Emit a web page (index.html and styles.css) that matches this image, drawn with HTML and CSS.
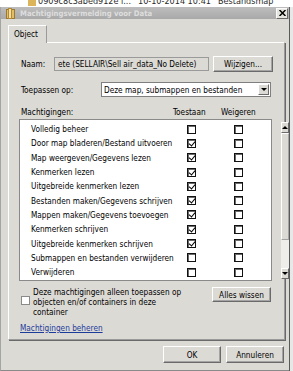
FILE: index.html
```html
<html>
<head>
    <title>Machtigingsvermelding voor Data</title>
    <link rel="stylesheet" href="styles.css">
</head>
<body>
    <!-- explorer row behind the dialog, only its lower half shows -->
    <div class="behind">
        <div class="behind-row">
            <span class="behind-icon"></span>
            <span class="behind-name">0909c8c3abed912e i...</span>
            <span class="behind-date">10-10-2014 10:41</span>
            <span class="behind-type">Bestandsmap</span>
        </div>
    </div>

    <div class="screen">
        <div class="dialog">
            <div class="titlebar">
                <svg class="title-icon" width="9" height="11" viewBox="0 0 9 11">
                    <rect x="0.5" y="1.5" width="8" height="9" fill="#e2bd63" stroke="#9c7a30"/>
                    <rect x="2.5" y="0.5" width="3" height="10" fill="#f4dea0" stroke="#b08a3a"/>
                </svg>
                <span class="title-text">Machtigingsvermelding voor Data</span>
                <div class="close-btn">
                    <svg width="7" height="6" viewBox="0 0 7 6">
                        <path d="M0.5 0 L6.5 6 M6.5 0 L0.5 6" stroke="#000" stroke-width="1.5"/>
                    </svg>
                </div>
            </div>

            <div class="body">
                <div class="tabs">
                    <div class="tab">Object</div>
                </div>
                <div class="panel">
                    <div class="row row-name">
                        <span class="lbl">Naam:</span>
                        <div class="name-field">ete (SELLAIR\Sell air_data_No Delete)</div>
                        <div class="btn btn-change">Wijzigen...</div>
                    </div>
                    <div class="row row-apply">
                        <span class="lbl">Toepassen op:</span>
                        <div class="combo">
                            <span class="combo-text">Deze map, submappen en bestanden</span>
                            <span class="combo-arrow"><span class="tri-down"></span></span>
                        </div>
                    </div>

                    <div class="perm-head">
                        <span class="perm-title">Machtigingen:</span>
                        <span class="col-allow">Toestaan</span>
                        <span class="col-deny">Weigeren</span>
                    </div>
                    <div class="listbox">
                        <div class="list-rows">
                            <div class="perm"><span class="perm-name">Volledig beheer</span><span class="cb"></span><span class="cb"></span></div>
                            <div class="perm"><span class="perm-name">Door map bladeren/Bestand uitvoeren</span><span class="cb on"></span><span class="cb"></span></div>
                            <div class="perm"><span class="perm-name">Map weergeven/Gegevens lezen</span><span class="cb on"></span><span class="cb"></span></div>
                            <div class="perm"><span class="perm-name">Kenmerken lezen</span><span class="cb on"></span><span class="cb"></span></div>
                            <div class="perm"><span class="perm-name">Uitgebreide kenmerken lezen</span><span class="cb on"></span><span class="cb"></span></div>
                            <div class="perm"><span class="perm-name">Bestanden maken/Gegevens schrijven</span><span class="cb on"></span><span class="cb"></span></div>
                            <div class="perm"><span class="perm-name">Mappen maken/Gegevens toevoegen</span><span class="cb on"></span><span class="cb"></span></div>
                            <div class="perm"><span class="perm-name">Kenmerken schrijven</span><span class="cb on"></span><span class="cb"></span></div>
                            <div class="perm"><span class="perm-name">Uitgebreide kenmerken schrijven</span><span class="cb on"></span><span class="cb"></span></div>
                            <div class="perm"><span class="perm-name">Submappen en bestanden verwijderen</span><span class="cb"></span><span class="cb"></span></div>
                            <div class="perm"><span class="perm-name">Verwijderen</span><span class="cb"></span><span class="cb"></span></div>
                        </div>
                        <div class="scrollbar">
                            <div class="sb-btn"><span class="tri-up"></span></div>
                            <div class="sb-thumb"></div>
                            <div class="sb-track"></div>
                            <div class="sb-btn"><span class="tri-down"></span></div>
                        </div>
                    </div>

                    <div class="row row-only">
                        <span class="cb-plain"></span>
                        <span class="only-text">Deze machtigingen alleen toepassen op objecten en/of containers in deze container</span>
                        <div class="btn btn-clear">Alles wissen</div>
                    </div>

                    <a class="manage" href="#">Machtigingen beheren</a>
                </div>

                <div class="footer">
                    <div class="btn btn-foot">OK</div>
                    <div class="btn btn-foot">Annuleren</div>
                </div>
            </div>
        </div>
        <div class="edge"></div>
    </div>
</body>
</html>
```

FILE: styles.css
```css
* {
    box-sizing: border-box;
}

body {
    margin: 0;
    width: 293px;
    height: 371px;
    overflow: hidden;
    background: #ffffff;
    font-family: 'DejaVu Sans Condensed', 'DejaVu Sans', sans-serif;
    font-size: 8.2px;
    color: #000;
}

/* explorer window behind the dialog */
.behind {
    height: 7px;
    overflow: hidden;
}

.behind-row {
    height: 12px;
    margin-top: -5px;
    display: flex;
    align-items: center;
    white-space: nowrap;
    color: #2a2a2a;
    padding-left: 28px;
    font-size: 9px;
    line-height: 12px;
}

.behind-icon {
    width: 8px;
    height: 10px;
    background: #dcb45a;
    margin-right: 2px;
}

.behind-name { width: 100px; }
.behind-date { width: 80px; }

.screen {
    display: flex;
    height: 364px;
}

.dialog {
    width: 289px;
    display: flex;
    flex-direction: column;
    background: #dcdad5;
    border-left: 1px solid #a4a4a4;
    border-bottom: 1px solid #8a8a8a;
}

.edge {
    flex: 1;
    background: #e8e8e8;
    border-left: 1px solid #5a5a5a;
}

.titlebar {
    height: 12px;
    display: flex;
    align-items: center;
    padding: 0 1px 0 5px;
    background: linear-gradient(to bottom, #bdbdbd, #a9a9a9);
}

.title-icon {
    margin-right: 5px;
}

.title-text {
    flex: 1;
    font-weight: bold;
    color: #dedede;
    font-size: 7.7px;
}

.close-btn {
    width: 12px;
    height: 11px;
    display: flex;
    align-items: center;
    justify-content: center;
    background: #e6e4df;
    border: 1px solid #6a6a6a;
    border-top-color: #fafafa;
    border-left-color: #fafafa;
}

.body {
    flex: 1;
    padding: 6px 4px 0 7px;
    display: flex;
    flex-direction: column;
}

.tabs {
    display: flex;
}

.tab {
    width: 39px;
    height: 18px;
    padding: 3px 0 0 5px;
    border: 1px solid #9a9a9a;
    border-bottom: none;
    border-top-color: #fff;
    border-left-color: #fff;
    background: #dcdad5;
    margin-bottom: -1px;
    position: relative;
}

.panel {
    height: 298px;
    border: 1px solid #9a9a9a;
    border-top-color: #fff;
    border-left-color: #fff;
    box-shadow: 1px 1px 0 #6a6a6a;
    padding: 13px 0 0 10px;
}

.row {
    display: flex;
    align-items: center;
}

.lbl {
    white-space: nowrap;
    padding-left: 2px;
}

.row-name {
    height: 16px;
}

.row-name .lbl {
    width: 35px;
}

.name-field {
    width: 155px;
    height: 14px;
    line-height: 12px;
    padding-left: 3px;
    border: 1px solid #9a9a9a;
    background: #dcdad5;
    white-space: nowrap;
    overflow: hidden;
}

.btn {
    display: flex;
    align-items: center;
    justify-content: center;
    border: 1px solid #6a6a6a;
    border-top-color: #fff;
    border-left-color: #fff;
    box-shadow: inset -1px -1px 0 #a4a4a4;
    background: #dcdad5;
    white-space: nowrap;
}

.btn-change {
    width: 60px;
    height: 16px;
    margin-left: 4px;
}

.row-apply {
    margin-top: 10px;
    height: 15px;
}

.row-apply .lbl {
    width: 82px;
}

.combo {
    width: 170px;
    height: 15px;
    display: flex;
    align-items: center;
    background: #fff;
    border: 1px solid #7f7f7f;
}

.combo-text {
    flex: 1;
    padding-left: 2px;
    white-space: nowrap;
    overflow: hidden;
}

.combo-arrow {
    width: 11px;
    height: 11px;
    margin-right: 1px;
    display: flex;
    align-items: center;
    justify-content: center;
    background: #dcdad5;
    border: 1px solid #6a6a6a;
    border-top-color: #fff;
    border-left-color: #fff;
}

.tri-down {
    width: 0;
    height: 0;
    border-left: 3px solid transparent;
    border-right: 3px solid transparent;
    border-top: 3px solid #000;
}

.tri-up {
    width: 0;
    height: 0;
    border-left: 3px solid transparent;
    border-right: 3px solid transparent;
    border-bottom: 3px solid #000;
}

.perm-head {
    display: flex;
    align-items: center;
    margin-top: 9px;
    height: 12px;
    white-space: nowrap;
}

.perm-title {
    width: 154px;
    padding-left: 2px;
}

.col-allow {
    width: 48px;
}

.listbox {
    margin-top: 1px;
    width: 253px;
    height: 162px;
    display: flex;
    background: #fff;
    border: 1px solid #8a8a8a;
}

.list-rows {
    flex: 1;
    padding: 2px 0 0 11px;
}

.perm {
    display: flex;
    align-items: center;
    height: 14.3px;
    white-space: nowrap;
}

.perm-name {
    width: 156px;
    overflow: hidden;
}

.cb {
    width: 9px;
    height: 9px;
    border: 1px solid #111;
    box-shadow: inset 1px 1px 0 #6a6a6a;
    background: #fff;
    margin-right: 38px;
    position: relative;
}

.cb.on::after {
    content: "";
    position: absolute;
    left: 2px;
    top: 0;
    width: 3px;
    height: 5px;
    border: solid #000;
    border-width: 0 1.5px 1.5px 0;
    transform: rotate(40deg);
}

.scrollbar {
    width: 11px;
    display: flex;
    flex-direction: column;
    margin: 2px 0 1px 0;
}

.sb-btn {
    height: 11px;
    display: flex;
    align-items: center;
    justify-content: center;
    background: #dcdad5;
    border: 1px solid #6a6a6a;
    border-top-color: #fff;
    border-left-color: #fff;
}

.sb-thumb {
    height: 107px;
    background: #dcdad5;
    border: 1px solid #a4a4a4;
    border-top-color: #fff;
    border-left-color: #fff;
}

.sb-track {
    flex: 1;
    background: #eeede9;
}

.row-only {
    margin-top: 6px;
    align-items: flex-start;
}

.cb-plain {
    width: 9px;
    height: 9px;
    border: 1px solid #8a8a8a;
    background: #fff;
    margin: 9px 3px 0 2px;
}

.only-text {
    width: 158px;
    line-height: 10px;
}

.btn-clear {
    width: 59px;
    height: 15px;
    margin-left: 21px;
}

.manage {
    display: inline-block;
    margin-top: 6px;
    margin-left: 1px;
    line-height: 10px;
    color: #1c3c9c;
    text-decoration: underline;
}

.footer {
    display: flex;
    justify-content: flex-end;
    gap: 5px;
    padding: 6px 1px 0 0;
}

.btn-foot {
    width: 58px;
    height: 17px;
}
```
